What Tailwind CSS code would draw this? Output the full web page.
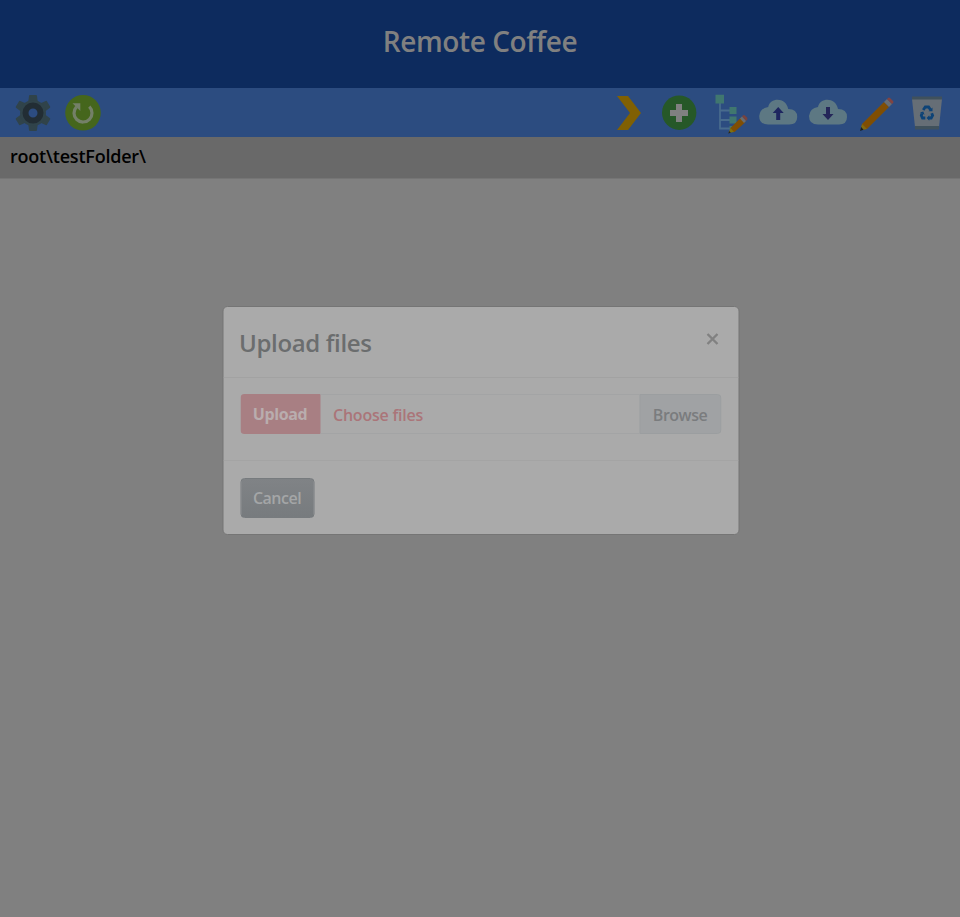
<!DOCTYPE html>
<html lang="en"><head><meta charset="utf-8"><title>Remote Coffee</title>
<script src="https://cdn.jsdelivr.net/npm/@tailwindcss/browser@4"></script></head>
<body class="bg-[#808080] h-[917px] overflow-hidden font-['Open_Sans','Noto_Sans',sans-serif]">
<header class="h-[88px] bg-[#0d2b5e] flex justify-center pt-5"><h1 class="text-[28px] leading-[42px] font-semibold text-[#808080] tracking-[-0.4px] whitespace-nowrap">Remote Coffee</h1></header>
<nav class="h-[49px] bg-[#2c4c80] flex items-center justify-between pl-[15px] pr-[15px]">
<div class="flex gap-[14px]">
<svg class="w-9 h-9" viewBox="0 0 36 36"><g fill="#30434a"><path id="t" d="M13 9 14 1Q14 0 15 0H21Q22 0 22 1L23 9V27L22 35Q22 36 21 36H15Q14 36 14 35L13 27Z"/><use href="#t" transform="rotate(60 18 18)"/><use href="#t" transform="rotate(120 18 18)"/><circle cx="18" cy="18" r="13"/></g><circle cx="18" cy="18" r="7.5" fill="#2c4c80" stroke="#222d34" stroke-width="6"/></svg>
<svg class="w-9 h-9" viewBox="0 0 36 36"><circle cx="18" cy="17.8" r="17.8" fill="#45661c"/><path d="M24.3 11.6A9 9 0 1 1 11.5 11.8" fill="none" stroke="#748068" stroke-width="3.2"/><path d="M7.5 8.3H15.3V16Z" fill="#748068"/></svg>
</div>
<div class="flex items-center gap-[13.5px]">
<svg class="w-9 h-9" viewBox="0 0 36 36"><path d="M5 1H16L29 18 16 35H5L18 18Z" fill="#806003"/></svg>
<svg class="w-9 h-9" viewBox="0 0 36 36"><circle cx="17.2" cy="17.7" r="17.2" fill="#265828"/><path d="M14 9H20V15H26V21H20V27H14V21H8V15H14Z" fill="#808080"/></svg>
<svg class="w-9 h-9 overflow-visible" viewBox="0 0 36 36"><g transform="translate(2.5 0)"><path d="M6.5 8V33.5H17M6.5 15.5H17M6.5 25H17" fill="none" stroke="#486b8d" stroke-width="1.8"/><path d="M2 -.3H10.5V8.5H2ZM16 12H23V19H16ZM16 21.5H23V28.5H16ZM16 31H20V34.5H16Z" fill="#40776f"/><path d="M27.5 22.5 32 27 21 37 16 37 17 33Z" fill="#804e03"/><path d="m28.5 21.5 1-1Q30.5 19.5 32 21L33.5 22.5Q34.5 24 33.5 25L32.5 26Z" fill="#77433f"/><path d="m26.5 23.5 2-2L32.5 26 30.5 28Z" fill="#686d70"/><path d="M17 33 15 38 20.5 37Z" fill="#80700e"/><path d="m15.7 36-.9 2.4 2.5-.7Z" fill="#222"/></g></svg>
<svg class="w-9 h-9 overflow-visible" viewBox="0 0 36 36"><g transform="translate(-.8 0)"><path id="c" d="M8 29.5Q-1 29.5-1 21 0 13 8 12C10 2 26 2 28 14Q37 14 37 22 37 29.5 29 29.5Z" fill="#5d7883"/><path d="M18 12 23.5 18H20V25H16V18H12.5Z" fill="#1e2660"/></g></svg>
<svg class="w-9 h-9 overflow-visible" viewBox="0 0 36 36"><use href="#c"/><path d="M16 12H20V19H23.5L18 25 12.5 19H16Z" fill="#242659"/></svg>
<svg class="w-9 h-9" viewBox="0 0 36 36"><path d="m2 29 22-22 5 5L7 34 1 35Z" fill="#804e03"/><path d="m24 7 3-3 5 5-3 3Z" fill="#686d70"/><path d="m27 4 1-1Q29 2 30 3L33 6Q34 7 33 8L32 9Z" fill="#824340"/><path d="M2 29 .5 35 7 34Z" fill="#806911"/><path d="M1.2 32 0 36 3.5 34.8Z" fill="#171e23"/></svg>
<svg class="w-9 h-9" viewBox="0 0 36 36"><path d="M3 4H33L30 32H6Z" fill="#666e76"/><path d="M3 1.5H33V4.5H3ZM6 31H30V34.5H6Z" fill="#40515c"/><g fill="none" stroke="#0d4377" stroke-width="2.8"><path d="M14.2 15 16.3 12H19.6L21.5 14.8"/><path d="M22.7 18.3 23.6 20.5 22.2 23H20"/><path d="M16.3 23H13.5L12.3 20.5 13 18.3"/></g><path d="M19.5 16.3H23.5V12.5ZM20.3 20.3V25.7L17.6 23ZM11 17.6 14.3 16.5 15.5 19.8Z" fill="#0d4377"/></svg>
</div></nav>
<div class="h-[42px] bg-[#696969] border-b border-[#757575] px-[10px] pt-[5px] text-[18px] leading-[29px] font-semibold text-black tracking-[-0.22px] whitespace-nowrap">root\testFolder\</div>
<section class="mx-auto mt-[127px] translate-x-[0.5px] w-[517px] h-[229px] rounded-[5px] border border-[#757575] bg-[#aaaaaa] overflow-hidden">
<header class="h-[71px] border-b border-[#a2a2a2] flex justify-between px-4 pt-[18px]"><h2 class="text-[24px] leading-[36px] font-semibold text-[#6b6d6e] tracking-[-0.35px]">Upload files</h2><button class="h-7 w-5 flex items-center justify-center" aria-label="Close"><svg class="w-3 h-3" viewBox="0 0 12 12"><path d="M1 1 11 11M11 1 1 11" stroke="#818181" stroke-width="2.4"/></svg></button></header>
<div class="h-[83px] border-b border-[#a4a4a4] pl-[17px] pr-[17px] pt-4"><div class="flex h-10 rounded overflow-hidden text-[16px] leading-[41px]">
<button class="w-[80px] bg-[#a87f83] text-[#b9adae] font-bold tracking-[-0.4px]">Upload</button>
<div class="flex-1 pl-[13px] border-y border-[#a3a4a5] text-[#aa7579] font-semibold leading-[40px] tracking-[-0.22px]">Choose files</div>
<button class="w-[82px] rounded-r border border-[#9b9ea0] bg-[#a0a2a4] text-[#7a7c7e] font-semibold leading-[40px] tracking-[-0.5px]">Browse</button></div></div>
<footer class="pl-[17px] pr-4 pt-[17px]"><button class="w-[74px] h-10 rounded border border-[#777b7e] bg-gradient-to-b from-[#808386] to-[#777b7e] text-[#a4a6a7] text-[16px] font-semibold tracking-[-0.5px]">Cancel</button></footer>
</section>
</body></html>
